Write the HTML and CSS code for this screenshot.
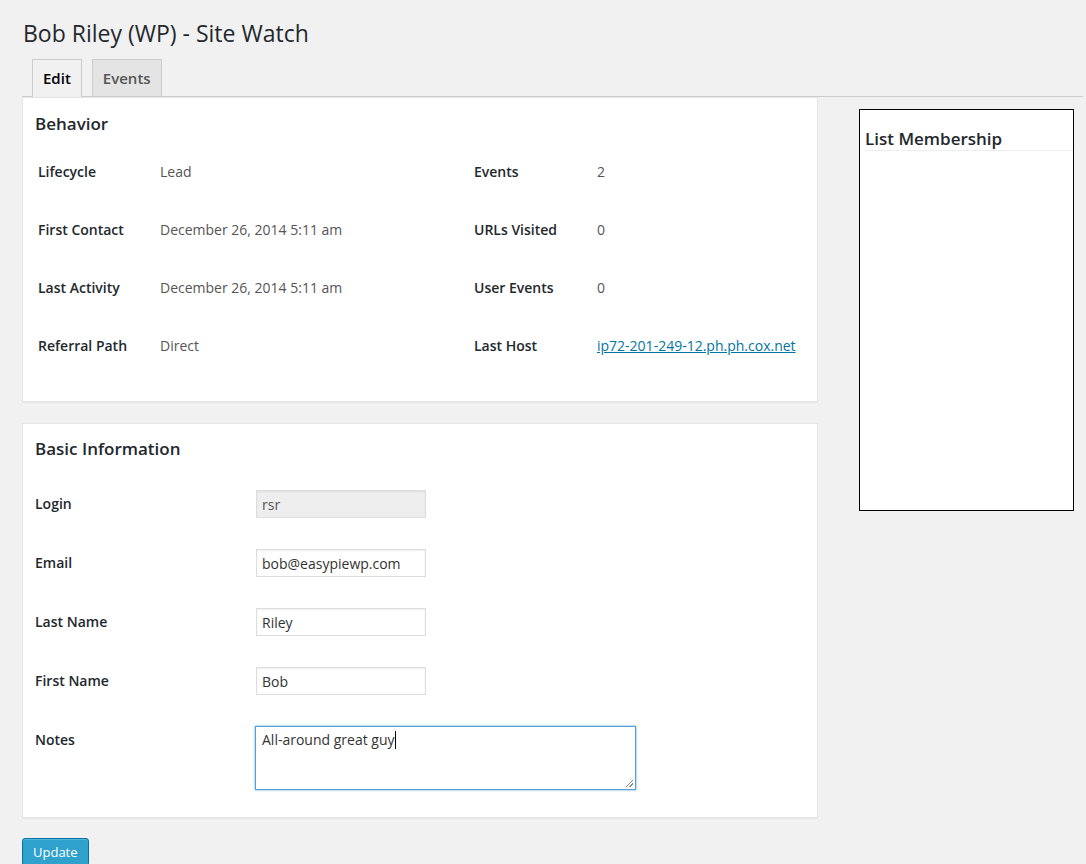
FILE: index.html
```html
<!DOCTYPE html>
<html>
<head>
<meta charset="utf-8">
<link rel="stylesheet" href="styles.css">
</head>
<body>
<div class="wrap">
  <h1 class="title">Bob Riley (WP) - Site Watch</h1>
  <div class="tabs">
    <a class="tab active">Edit</a>
    <a class="tab">Events</a>
  </div>
  <div class="columns">
    <div class="main">
      <div class="card behavior">
        <h3 class="card-title">Behavior</h3>
        <div class="stats">
          <div class="lbl">Lifecycle</div><div class="val">Lead</div>
          <div class="lbl">Events</div><div class="val">2</div>
          <div class="lbl">First Contact</div><div class="val">December 26, 2014 5:11 am</div>
          <div class="lbl">URLs Visited</div><div class="val">0</div>
          <div class="lbl">Last Activity</div><div class="val">December 26, 2014 5:11 am</div>
          <div class="lbl">User Events</div><div class="val">0</div>
          <div class="lbl">Referral Path</div><div class="val">Direct</div>
          <div class="lbl">Last Host</div><div class="val"><a class="link" href="#">ip72-201-249-12.ph.ph.cox.net</a></div>
        </div>
      </div>
      <div class="card basic">
        <h3 class="card-title">Basic Information</h3>
        <div class="form-row">
          <div class="flabel">Login</div>
          <div class="ffield"><input class="input readonly" type="text" value="rsr" readonly></div>
        </div>
        <div class="form-row">
          <div class="flabel">Email</div>
          <div class="ffield"><input class="input" type="text" value="bob@easypiewp.com"></div>
        </div>
        <div class="form-row">
          <div class="flabel">Last Name</div>
          <div class="ffield"><input class="input" type="text" value="Riley"></div>
        </div>
        <div class="form-row">
          <div class="flabel">First Name</div>
          <div class="ffield"><input class="input" type="text" value="Bob"></div>
        </div>
        <div class="form-row">
          <div class="flabel">Notes</div>
          <div class="ffield"><div class="textarea">All-around great guy<span class="caret"></span><span class="grip"></span></div></div>
        </div>
      </div>
      <button class="button">Update</button>
    </div>
    <div class="side">
      <div class="membership">
        <h3 class="side-title">List Membership</h3>
      </div>
    </div>
  </div>
</div>
</body>
</html>
```
FILE: styles.css
```css
html, body {
  margin: 0;
  padding: 0;
}
body {
  background: #f1f1f1;
  font-family: "Open Sans", sans-serif;
  color: #444;
  font-size: 13px;
  overflow: hidden;
}
.wrap {
  padding: 0 3px 0 22px;
}
.title {
  margin: 0;
  padding: 19px 0 0 1px;
  font-size: 23px;
  font-weight: 400;
  line-height: 29px;
  color: #23282d;
}
.tabs {
  display: flex;
  margin-top: 11px;
  border-bottom: 1px solid #ccc;
  height: 37px;
}
.tab {
  margin-left: 10px;
  padding: 6px 10px;
  font-size: 15px;
  line-height: 24px;
  font-weight: 600;
  border: 1px solid #ccc;
  border-bottom: none;
  background: #e4e4e4;
  color: #555;
  height: 24px;
}
.tab.active {
  background: #f1f1f1;
  color: #000;
  height: 25px;
  padding-bottom: 6px;
}
.columns {
  display: flex;
  align-items: flex-start;
}
.main {
  width: 796px;
}
.card {
  background: #fff;
  border: 1px solid #e5e5e5;
  box-shadow: 0 1px 1px rgba(0,0,0,0.04);
  padding: 0 12px;
}
.card-title {
  margin: 0;
  font-size: 17px;
  font-weight: 600;
  line-height: 24px;
  color: #23282d;
}
.behavior {
  padding-top: 14px;
  padding-bottom: 27px;
}
.stats {
  margin-top: 6px;
  display: grid;
  grid-template-columns: 122px 314px 123px 1fr;
  grid-auto-rows: 58px;
  padding-left: 3px;
  align-items: center;
}
.lbl {
  font-size: 14px;
  font-weight: 600;
  color: #23282d;
}
.val {
  font-size: 14px;
  color: #555;
}
.link {
  color: #0074a2;
  text-decoration: underline;
}
.basic {
  margin-top: 21px;
  padding-top: 13px;
  padding-bottom: 11px;
}
.basic .card-title {
  margin-bottom: 14px;
}
.form-row {
  display: grid;
  grid-template-columns: 221px 1fr;
}
.flabel {
  padding: 20px 0 0;
  font-size: 14px;
  font-weight: 600;
  line-height: 18px;
  color: #23282d;
}
.ffield {
  padding: 15px 0 16px;
}
.input {
  box-sizing: border-box;
  display: block;
  width: 170px;
  height: 28px;
  margin: 0;
  padding: 3px 5px;
  border: 1px solid #ddd;
  box-shadow: inset 0 1px 2px rgba(0,0,0,0.07);
  font-family: "Open Sans", sans-serif;
  font-size: 14px;
  color: #333;
  background: #fff;
  outline: none;
}
.input.readonly {
  background: #eee;
  color: #555;
}
.textarea {
  position: relative;
  box-sizing: border-box;
  width: 381px;
  height: 64px;
  margin-left: -1px;
  padding: 3px 6px;
  border: 1px solid #5b9dd9;
  box-shadow: 0 0 2px rgba(30,140,190,0.8);
  font-size: 14px;
  line-height: 20px;
  color: #333;
}
.caret {
  display: inline-block;
  width: 1px;
  height: 18px;
  background: #000;
  vertical-align: -4px;
}
.grip {
  position: absolute;
  right: 2px;
  bottom: 2px;
  width: 7px;
  height: 7px;
  background: linear-gradient(135deg, transparent 45%, #888 45%, #888 55%, transparent 55%, transparent 70%, #888 70%, #888 80%, transparent 80%);
}
.button {
  display: block;
  margin-top: 20px;
  height: 28px;
  padding: 0 10px 1px;
  background: #2ea2cc;
  border: 1px solid #0074a2;
  border-radius: 3px;
  box-shadow: inset 0 1px 0 rgba(120,200,230,0.5);
  color: #fff;
  font-family: "Open Sans", sans-serif;
  font-size: 13px;
  line-height: 26px;
}
.side {
  margin-left: 41px;
  padding-top: 12px;
}
.membership {
  box-sizing: border-box;
  width: 215px;
  height: 402px;
  border: 1px solid #000;
  background: #fff;
  padding-left: 5px;
}
.side-title {
  margin: 17px 0 0;
  font-size: 17px;
  font-weight: 600;
  line-height: 23px;
  color: #23282d;
  border-bottom: 1px solid #eee;
}
```
